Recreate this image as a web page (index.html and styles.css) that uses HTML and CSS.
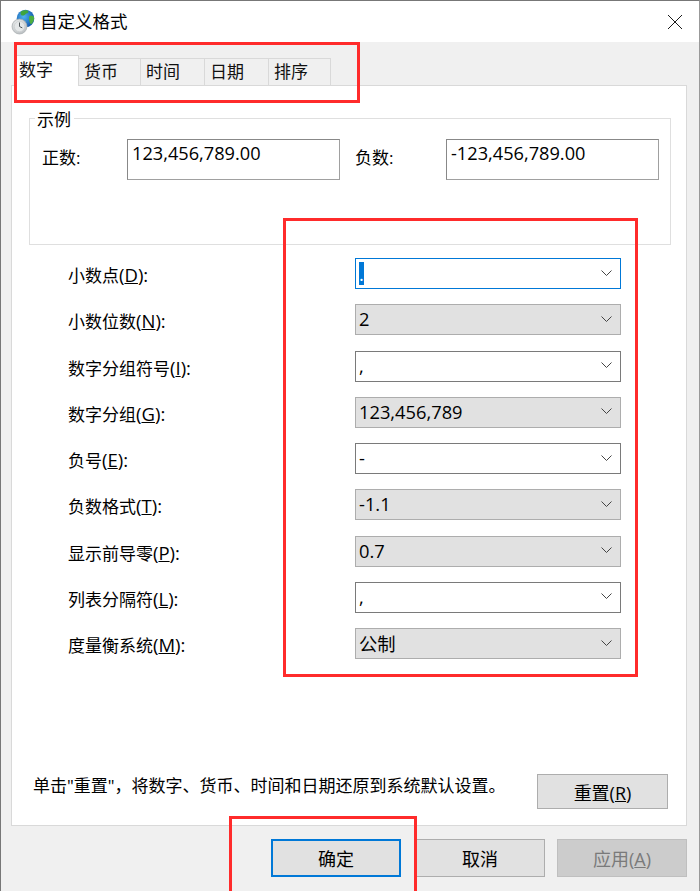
FILE: index.html
```html
<!DOCTYPE html>
<html lang="zh-CN">
<head>
<meta charset="utf-8">
<title>自定义格式</title>
<link rel="stylesheet" href="styles.css">
</head>
<body>
<div class="window">
  <header class="titlebar">
    <svg class="app-icon" width="24" height="26" viewBox="0 0 24 26">
      <defs>
        <radialGradient id="globe" cx="0.4" cy="0.4" r="0.7">
          <stop offset="0" stop-color="#4fb2ee"/>
          <stop offset="1" stop-color="#0b4fa8"/>
        </radialGradient>
        <radialGradient id="clock" cx="0.4" cy="0.35" r="0.75">
          <stop offset="0" stop-color="#f2f4f4"/>
          <stop offset="1" stop-color="#b4b9bc"/>
        </radialGradient>
      </defs>
      <circle cx="14.500" cy="9.500" r="8.800" fill="url(#globe)"/>
      <path d="M10 2.500c2-1.200 5-1.500 7-.8 1 1.300 0 2.600-1.800 2.800-1 1.200-2.500 2.400-4.500 2-1.300-1-1.500-2.800-.7-4z" fill="#3fa53c"/>
      <path d="M18.500 7c1.500-.7 3.800-.3 4.500 1 .3 3-1 6-3 7.500-1.500-2-2.800-6-1.500-8.500z" fill="#4daf3f"/>
      <circle cx="8.500" cy="17.500" r="7.500" fill="url(#clock)" stroke="#a5abae" stroke-width="0.700"/>
      <circle cx="8.500" cy="17.500" r="5.200" fill="#e4e7e8" stroke="#c4c8ca" stroke-width="0.600"/>
      <path d="M8.500 13.500v4l2.800 1.400" fill="none" stroke="#4f565a" stroke-width="1"/>
    </svg>
    <span class="title-text">自定义格式</span>
    <svg class="close-icon" width="16" height="16" viewBox="0 0 16 16">
      <path d="M1 1l14 14M15 1L1 15" stroke="#1a1a1a" stroke-width="1" fill="none"/>
    </svg>
  </header>

  <div class="body">
    <nav class="tabs">
      <div class="tab tab-active">数字</div>
      <div class="tab tab-w62">货币</div>
      <div class="tab tab-w64">时间</div>
      <div class="tab tab-w64">日期</div>
      <div class="tab tab-w62">排序</div>
    </nav>

    <main class="panel">
      <section class="group">
        <span class="legend">示例</span>
        <div class="sample-row">
          <span class="sample-label">正数:</span>
          <div class="sample-box">123,456,789.00</div>
          <span class="sample-label sample-label-neg">负数:</span>
          <div class="sample-box sample-box-neg">-123,456,789.00</div>
        </div>
      </section>

      <section class="form">
        <div class="row">
          <label class="row-label">小数点<span class="key">(<u>D</u>):</span></label>
          <div class="combo combo-focus"><span class="sel">.</span><svg class="chev" width="11" height="6" viewBox="0 0 11 6"><path d="M0.5 0.5L5.500 5.500l5-5" fill="none" stroke="#444" stroke-width="1"/></svg></div>
        </div>
        <div class="row">
          <label class="row-label">小数位数<span class="key">(<u>N</u>):</span></label>
          <div class="combo combo-gray"><span class="val">2</span><svg class="chev" width="11" height="6" viewBox="0 0 11 6"><path d="M0.5 0.5L5.500 5.500l5-5" fill="none" stroke="#444" stroke-width="1"/></svg></div>
        </div>
        <div class="row">
          <label class="row-label">数字分组符号<span class="key">(<u>I</u>):</span></label>
          <div class="combo"><span class="val">,</span><svg class="chev" width="11" height="6" viewBox="0 0 11 6"><path d="M0.5 0.5L5.500 5.500l5-5" fill="none" stroke="#444" stroke-width="1"/></svg></div>
        </div>
        <div class="row">
          <label class="row-label">数字分组<span class="key">(<u>G</u>):</span></label>
          <div class="combo combo-gray"><span class="val">123,456,789</span><svg class="chev" width="11" height="6" viewBox="0 0 11 6"><path d="M0.5 0.5L5.500 5.500l5-5" fill="none" stroke="#444" stroke-width="1"/></svg></div>
        </div>
        <div class="row">
          <label class="row-label">负号<span class="key">(<u>E</u>):</span></label>
          <div class="combo"><span class="val">-</span><svg class="chev" width="11" height="6" viewBox="0 0 11 6"><path d="M0.5 0.5L5.500 5.500l5-5" fill="none" stroke="#444" stroke-width="1"/></svg></div>
        </div>
        <div class="row">
          <label class="row-label">负数格式<span class="key">(<u>T</u>):</span></label>
          <div class="combo combo-gray"><span class="val">-1.1</span><svg class="chev" width="11" height="6" viewBox="0 0 11 6"><path d="M0.5 0.5L5.500 5.500l5-5" fill="none" stroke="#444" stroke-width="1"/></svg></div>
        </div>
        <div class="row">
          <label class="row-label">显示前导零<span class="key">(<u>P</u>):</span></label>
          <div class="combo combo-gray"><span class="val">0.7</span><svg class="chev" width="11" height="6" viewBox="0 0 11 6"><path d="M0.5 0.5L5.500 5.500l5-5" fill="none" stroke="#444" stroke-width="1"/></svg></div>
        </div>
        <div class="row">
          <label class="row-label">列表分隔符<span class="key">(<u>L</u>):</span></label>
          <div class="combo"><span class="val">,</span><svg class="chev" width="11" height="6" viewBox="0 0 11 6"><path d="M0.5 0.5L5.500 5.500l5-5" fill="none" stroke="#444" stroke-width="1"/></svg></div>
        </div>
        <div class="row">
          <label class="row-label">度量衡系统<span class="key">(<u>M</u>):</span></label>
          <div class="combo combo-gray"><span class="val">公制</span><svg class="chev" width="11" height="6" viewBox="0 0 11 6"><path d="M0.5 0.5L5.500 5.500l5-5" fill="none" stroke="#444" stroke-width="1"/></svg></div>
        </div>
      </section>

      <section class="reset-row">
        <p class="note">单击"重置"，将数字、货币、时间和日期还原到系统默认设置。</p>
        <button class="btn btn-reset">重置(<u>R</u>)</button>
      </section>
    </main>

    <footer class="footer">
      <button class="btn btn-default">确定</button>
      <button class="btn">取消</button>
      <button class="btn btn-disabled">应用(<u>A</u>)</button>
    </footer>
  </div>

  <div class="mark mark-tabs"></div>
  <div class="mark mark-combos"></div>
  <div class="mark mark-ok"></div>
</div>
</body>
</html>
```
FILE: styles.css
```css
* { box-sizing: border-box; }
html, body { margin: 0; padding: 0; }
body {
  width: 700px;
  height: 891px;
  overflow: hidden;
  font-family: "Open Sans", "Noto Sans CJK SC", sans-serif;
  font-size: 17px;
  color: #000;
  background: #f0f0f0;
}
.window {
  position: relative;
  width: 700px;
  height: 891px;
  border-top: 1px solid #777;
  border-left: 1px solid #777;
  border-right: 1px solid #999;
  overflow: hidden;
  display: flex;
  flex-direction: column;
}
.titlebar {
  height: 41px;
  background: #fff;
  display: flex;
  align-items: center;
  padding: 0 16px 0 10px;
  flex: none;
}
.app-icon { margin-top: 1px; flex: none; }
.title-text {
  margin-left: 5px;
  font-size: 17.500px;
  line-height: 22px;
  margin-top: -2px;
  font-family: "Noto Sans CJK SC", sans-serif;
  color: #000;
}
.close-icon { margin-left: auto; }
.body {
  flex: 1;
  background: #f0f0f0;
  display: flex;
  flex-direction: column;
}
.tabs {
  display: flex;
  align-items: flex-end;
  height: 43px;
  padding-left: 13px;
  position: relative;
  z-index: 1;
  flex: none;
}
.tab {
  height: 28px;
  margin-bottom: -1px;
  background: #f0f0f0;
  border: 1px solid #d9d9d9;
  border-left-width: 0;
  padding-left: 5px;
  font-family: "Noto Sans CJK SC", sans-serif;
  font-size: 17px;
  line-height: 23px;
  color: #111;
}
.tab-active {
  width: 65px;
  height: 31px;
  background: #fff;
  border: 1px solid #d9d9d9;
  border-bottom: 0;
  padding-left: 4px;
  line-height: 26px;
  margin-bottom: -1px;
}
.tab-w62 { width: 62px; }
.tab-w64 { width: 64px; }
.panel {
  margin: 0 12px 0 10px;
  height: 741px;
  background: #fff;
  border: 1px solid #d9d9d9;
  flex: none;
  display: flex;
  flex-direction: column;
  padding: 32px 15px 0 17px;
}
.group {
  position: relative;
  height: 127px;
  border: 1px solid #dfdfdf;
  flex: none;
}
.legend {
  position: absolute;
  left: 5px;
  top: -11px;
  padding: 0 3px 0 2px;
  background: #fff;
  font-family: "Noto Sans CJK SC", sans-serif;
  font-size: 17px;
  line-height: 22px;
}
.sample-row {
  display: flex;
  align-items: flex-start;
  padding: 20px 0 0 12px;
}
.sample-label {
  width: 85px;
  line-height: 38px;
  white-space: nowrap;
}
.sample-label-neg { width: 91px; margin-left: 15px; }
.sample-box {
  width: 213px;
  height: 41px;
  padding: 0 0 0 4px;
  border: 1px solid #888;
  border-right-color: #a0a0a0;
  border-bottom-color: #a0a0a0;
  background: #fff;
  font-size: 18.200px;
  line-height: 26px;
  white-space: nowrap;
}
.form {
  display: flex;
  flex-direction: column;
  gap: 15.250px;
  margin-top: 13px;
  padding-left: 39px;
  flex: none;
}
.row {
  display: flex;
  align-items: center;
  height: 31px;
}
.row-label {
  width: 287px;
  padding-top: 2px;
  white-space: nowrap;
  color: #000;
}
.key { font-size: 18.500px; }
.combo {
  position: relative;
  width: 266px;
  height: 31px;
  display: flex;
  align-items: center;
  justify-content: space-between;
  padding: 0 8px 0 3px;
  background: #fff;
  border: 1px solid #7a7a7a;
  font-size: 18.300px;
}
.val { margin-top: -2px; }
.chev { margin-top: -2px; }
.combo-gray {
  background: #e1e1e1;
  border-color: #adadad;
}
.combo-focus { border-color: #0078d7; }
.sel {
  background: #0078d7;
  color: #fff;
  width: 5px;
  height: 23px;
  line-height: 23px;
  overflow: hidden;
}
.reset-row {
  display: flex;
  align-items: center;
  justify-content: space-between;
  margin-top: 115px;
  height: 35px;
  flex: none;
  margin-right: 3px;
  padding-left: 4px;
}
.note {
  margin: 0 0 14px;
  font-size: 17px;
  white-space: nowrap;
  font-family: "Open Sans", "Noto Sans CJK SC", sans-serif;
}
.btn {
  width: 130px;
  height: 38px;
  background: #e1e1e1;
  border: 1px solid #adadad;
  font-family: "Open Sans", "Noto Sans CJK SC", sans-serif;
  font-size: 18px;
  color: #000;
  padding: 0;
}
.btn-reset { width: 131px; height: 35px; }
.btn-default {
  border: 2px solid #0078d7;
  margin-right: 2px;
}
.btn-disabled {
  background: #cccccc;
  border-color: #bfbfbf;
  color: #7a7a7a;
}
.footer {
  display: flex;
  justify-content: flex-end;
  gap: 12px;
  padding: 13px 12px 0 0;
  flex: none;
}
.mark {
  position: absolute;
  border: 3px solid #ff2b2b;
  pointer-events: none;
  z-index: 5;
}
.mark-tabs { left: 13px; top: 41px; width: 346px; height: 61px; }
.mark-combos { left: 282px; top: 217px; width: 355px; height: 459px; }
.mark-ok { left: 228px; top: 815px; width: 188px; height: 80px; }
```
